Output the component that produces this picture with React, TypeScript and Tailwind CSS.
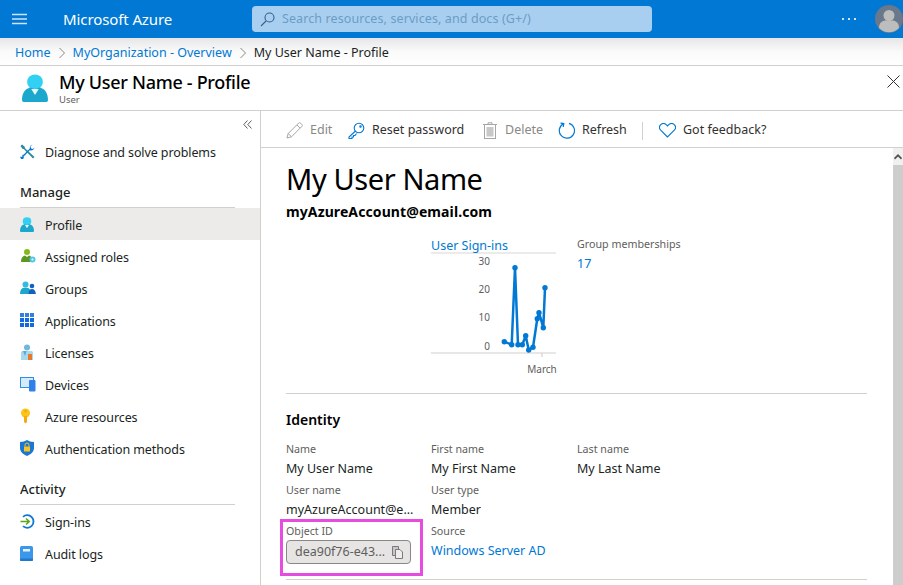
import { ReactNode } from "react"

const font = { fontFamily: '"Noto Sans", "Open Sans", sans-serif' }

function ProfileIcon({ width = 14, height = 15 }: { width?: number; height?: number }) {
  return (
    <svg width={width} height={height} viewBox="0 0 28 32" preserveAspectRatio="none">
      <circle cx="14" cy="9" r="8.500" fill="#32d0f2" />
      <path d="M0 30c0-8 3-13 9-14.500l5 2 5-2c6 1.500 9 6.500 9 14.500a2 2 0 0 1-2 2H2a2 2 0 0 1-2-2z" fill="#1ba8cc" />
      <path d="M10 17h8l-4 7z" fill="#e8f8fc" />
    </svg>
  )
}

function DiagnoseIcon() {
  return (
    <svg width="15" height="15" viewBox="0 0 15 15">
      <path d="M.5 2L2 .5l2.800 2.200v1.200l9.700 9L13 14.500 3.800 5H2.700z" fill="#2a8a9e" />
      <path d="M14.500 3.500a3.600 3.600 0 0 1-4.800 2.700L3.500 12.700a2 2 0 0 1 .3 1.300 1.800 1.800 0 0 1-3.300-1.500l1.200.6 1-1-.6-1.200a2 2 0 0 1 1.400-.1l6.300-6.300A3.600 3.600 0 0 1 12.500.5l-2 2 .6 1.900 1.900.6z" fill="#0078d4" />
    </svg>
  )
}

function RolesIcon() {
  return (
    <svg width="16" height="16" viewBox="0 0 16 16">
      <circle cx="7" cy="4" r="3" fill="#86b818" />
      <path d="M1 14c0-4 1.500-6 4-6.500L7 9l2-1.500c2 .5 3 2 3 6.500z" fill="#5e9624" />
      <circle cx="12.500" cy="11.500" r="3" fill="#50c7e8" />
      <circle cx="12.500" cy="11.500" r="1" fill="#ffffff" />
    </svg>
  )
}

function GroupsIcon() {
  return (
    <svg width="16" height="14" viewBox="0 0 16 14">
      <circle cx="5.500" cy="3.500" r="3" fill="#32bde0" />
      <path d="M0 13c0-4 1.500-6 4-6.300h3c2.500.3 4 2.300 4 6.300z" fill="#1ba8cc" />
      <circle cx="12" cy="5" r="2.300" fill="#0f62c0" />
      <path d="M8.500 13c0-3 1.200-5 3.500-5s3.800 2 3.800 5z" fill="#0f62c0" />
    </svg>
  )
}

function AppsIcon() {
  const cells = [0, 5, 10]
  return (
    <svg width="14" height="14" viewBox="0 0 14 14">
      {cells.map((y) =>
        cells.map((x) => <rect key={`${x}-${y}`} x={x} y={y} width="4" height="4" fill={y === 0 ? "#2f7fdc" : "#0f6cdc"} />),
      )}
    </svg>
  )
}

function LicenseIcon() {
  return (
    <svg width="14" height="17" viewBox="0 0 14 17">
      <circle cx="7" cy="3.500" r="3" fill="#6fb7dc" />
      <path d="M1 16V8.500C1 7.500 2 7 3 7h8c1 0 2 .5 2 1.500V16z" fill="#a8d8ee" />
      <path d="M3 7h3.500L5 12z" fill="#59a7d2" />
      <rect x="8" y="10" width="4" height="6" fill="#e8792b" />
    </svg>
  )
}

function DevicesIcon() {
  return (
    <svg width="16" height="15" viewBox="0 0 16 15">
      <rect x="0.500" y="0.500" width="13" height="10" fill="#d5ebfa" stroke="#2f8fe0" />
      <rect x="9" y="3" width="6.500" height="11.500" rx="1" fill="#2f80e8" />
    </svg>
  )
}

function KeyIcon() {
  return (
    <svg width="11" height="16" viewBox="0 0 11 16">
      <circle cx="5.500" cy="5" r="4.500" fill="#fcc419" />
      <circle cx="5.500" cy="3.200" r="1.100" fill="#f39c12" />
      <path d="M4 8h3v6l-1.500 1.500L4 14z" fill="#f7a90f" />
    </svg>
  )
}

function ShieldIcon() {
  return (
    <svg width="14" height="16" viewBox="0 0 14 16">
      <path d="M7 0c2 1.300 4 1.800 7 2v6c0 3.500-3 6.500-7 8-4-1.500-7-4.500-7-8V2c3-.2 5-.7 7-2z" fill="#1a78d2" />
      <rect x="4" y="6.500" width="6" height="5" rx="0.500" fill="#f7c325" />
      <path d="M5 6.500V5a2 2 0 0 1 4 0v1.500" fill="none" stroke="#f7c325" />
    </svg>
  )
}

function SignInIcon() {
  return (
    <svg width="15" height="15" viewBox="0 0 15 15">
      <path d="M3 2.800A6.300 6.300 0 1 1 3 12.200" fill="none" stroke="#0f78d4" strokeWidth="1.800" />
      <path d="M0.500 7.500H9M6 4.500l3.200 3-3.200 3" fill="none" stroke="#5ca81c" strokeWidth="1.600" />
    </svg>
  )
}

function AuditIcon() {
  return (
    <svg width="13" height="15" viewBox="0 0 13 15">
      <rect width="13" height="15" rx="1.500" fill="#3c97ea" />
      <rect x="3" y="3" width="7" height="2.500" fill="#e6f2fc" />
      <rect y="12.500" width="13" height="2.500" rx="1" fill="#1f78cc" />
    </svg>
  )
}

function Pencil() {
  return (
    <svg width="17" height="17" viewBox="0 0 17 17" fill="none" stroke="#a6a6a6" strokeWidth="1">
      <path d="M1 16l1.200-4.500L12.500 1.200a1.500 1.500 0 0 1 2.100 0l1.200 1.200a1.500 1.500 0 0 1 0 2.100L5.500 14.800z" />
      <path d="M2.200 11.500l3.300 3.300M11 3l3 3" />
    </svg>
  )
}

function ResetKey() {
  return (
    <svg width="17" height="17" viewBox="0 0 17 17" fill="none" stroke="#0078d4" strokeWidth="1.100">
      <circle cx="11" cy="6" r="4.800" />
      <circle cx="12.500" cy="4.500" r="0.700" />
      <path d="M7.500 9L1 15v1.500h3V15h1.500v-1.500H7l1.500-2" />
    </svg>
  )
}

function Trash() {
  return (
    <svg width="14" height="17" viewBox="0 0 14 17">
      <path d="M0 2.500h14M5 2.500V.8h4v1.700" stroke="#a6a6a6" fill="none" />
      <rect x="1.500" y="2.500" width="11" height="14" fill="none" stroke="#a6a6a6" />
      <rect x="3.500" y="5" width="7" height="9.500" fill="#c8c8c8" />
    </svg>
  )
}

function RefreshIcon() {
  return (
    <svg width="17" height="17" viewBox="0 0 17 17" fill="none" stroke="#0078d4" strokeWidth="1.200">
      <path d="M5.500 1.800A7.600 7.600 0 1 0 11 1.300" />
      <path d="M2.500 1.200l3.300.4-.6 3.400" />
    </svg>
  )
}

function Heart() {
  return (
    <svg width="17" height="15" viewBox="0 0 17 15" fill="none" stroke="#0078d4" strokeWidth="1.100">
      <path d="M8.500 14L1.700 7.200a4 4 0 0 1 0-5.500 4 4 0 0 1 5.500 0l1.300 1.300 1.300-1.300a4 4 0 0 1 5.500 0 4 4 0 0 1 0 5.500z" />
    </svg>
  )
}

function CopyIcon() {
  return (
    <svg width="11" height="13" viewBox="0 0 11 13" fill="none" stroke="#7a7a7a">
      <path d="M.5.500h6v9h-6z" fill="#c8c8c8" />
      <path d="M3.500 3.500h4.500l2.500 2.500v6.500h-7z" fill="#ededed" />
    </svg>
  )
}

function Chevron() {
  return (
    <svg width="8" height="12" viewBox="0 0 8 12" fill="none" stroke="#8a8886">
      <path d="M1.500 1l5 5-5 5" />
    </svg>
  )
}

function NavItem({ icon, label, active }: { icon: ReactNode; label: string; active?: boolean }) {
  return (
    <div className={`flex h-8 items-center pl-5 ${active ? "bg-[#edebe9]" : ""}`}>
      <span className="flex w-[25px] shrink-0 items-center">{icon}</span>
      <span className="pt-[5px] text-[12.500px] tracking-[-0.1px] text-[#201f1e]">{label}</span>
    </div>
  )
}

function SectionHead({ title }: { title: string }) {
  return (
    <div className="mr-[25px] ml-5 flex h-8 items-center border-b border-[#d2d0ce] pt-[2px] text-[13px] font-medium text-[#201f1e]">
      {title}
    </div>
  )
}

function ToolButton({ icon, label, disabled, className, iconClass = "w-6" }: { icon: ReactNode; label: string; disabled?: boolean; className: string; iconClass?: string }) {
  return (
    <div className={`flex items-center ${className}`}>
      <span className={`flex shrink-0 items-center ${iconClass}`}>{icon}</span>
      <span className={`text-[12.500px] ${disabled ? "text-[#8a8886]" : "text-[#323130]"}`}>{label}</span>
    </div>
  )
}

function Field({ label, value, link }: { label: string; value: string; link?: boolean }) {
  return (
    <div className="h-[41px] min-w-0">
      <div className="h-[17px] text-[10.700px] leading-[19px] text-[#605e5c]">{label}</div>
      <div className={`h-6 text-[12.500px] leading-6 whitespace-nowrap ${link ? "text-[#0078d4]" : "text-[#201f1e]"}`}>{value}</div>
    </div>
  )
}

const signIns: [number, number][] = [
  [73.3, 88.7], [80.7, 91.7], [84, 14.7], [87, 91.7], [91.3, 91.7], [94.7, 82.7],
  [97.7, 97], [102, 94.3], [106.3, 65.7], [108, 59.7], [112.3, 74.7], [114, 34.7],
]

function SignInChart() {
  const line = signIns.map(([x, y]) => `${x},${y}`).join(" ")
  return (
    <svg width="126" height="123" viewBox="0 1 126 123" className="block">
      <line x1="0" x2="125" y1="100" y2="100" stroke="#e1dfdd" strokeWidth="1.500" />
      <line x1="111" x2="111" y1="100" y2="104" stroke="#c8c6c4" />
      {[[30, 8], [20, 36], [10, 64], [0, 93]].map(([v, y]) => (
        <text key={v} x="59" y={y + 4} textAnchor="end" fontSize="10" fill="#605e5c">{v}</text>
      ))}
      <text x="111" y="120" textAnchor="middle" fontSize="10" fill="#605e5c">March</text>
      <polyline points={line} fill="none" stroke="#0078d4" strokeWidth="2.500" strokeLinejoin="round" />
      {signIns.map(([x, y]) => <circle key={x} cx={x} cy={y} r="2.700" fill="#0078d4" />)}
    </svg>
  )
}

export default function App() {
  return (
    <div className="flex h-[585px] w-[903px] flex-col overflow-hidden bg-white" style={font}>
      <header className="flex h-[38px] shrink-0 items-center bg-[#0078d4] text-white">
        <div className="flex w-[63px] shrink-0 justify-center pr-[25px]">
          <svg width="15" height="12" viewBox="0 0 15 12" stroke="#cfe4f6" strokeWidth="1.300">
            <path d="M0 1.500h15M0 6h15M0 10.500h15" />
          </svg>
        </div>
        <div className="w-[189px] shrink-0 text-[15px] tracking-[-0.1px]">Microsoft Azure</div>
        <div className="flex h-[26px] w-[400px] items-center rounded-sm bg-[#a9cff0] pl-2">
          <svg width="15" height="15" viewBox="0 0 15 15" fill="none" stroke="#32628c" strokeWidth="1.100" className="mr-[7px] shrink-0">
            <circle cx="9.500" cy="5.500" r="4.500" />
            <path d="M6 9L1 14" />
          </svg>
          <span className="text-[12.500px] tracking-[0.1px] text-[#6c9cc6]">Search resources, services, and docs (G+/)</span>
        </div>
        <div className="ml-auto flex items-center">
          <span className="mr-[19px] flex gap-1">
            <i className="h-[2px] w-[2px] bg-[#cfe4f6]" />
            <i className="h-[2px] w-[2px] bg-[#cfe4f6]" />
            <i className="h-[2px] w-[2px] bg-[#cfe4f6]" />
          </span>
          <svg width="28" height="28" viewBox="0 0 28 28">
            <circle cx="14" cy="14" r="14" fill="#69788a" />
            <circle cx="14" cy="10.500" r="5.500" fill="#bdbdbd" />
            <path d="M4 23c0-5 3-7 6-7.500h8c3 .5 6 2.500 6 7.500a14 14 0 0 1-20 0z" fill="#bdbdbd" />
          </svg>
        </div>
      </header>

      <nav className="flex h-[28px] shrink-0 items-center border-b border-[#d2d0ce] bg-gradient-to-b from-[#e6e6e6] via-[#fafafa] to-white pt-[3px] pl-[15px] text-[12.500px]">
        <span className="text-[#0078d4]">Home</span>
        <span className="mx-[7px]"><Chevron /></span>
        <span className="text-[#0078d4]">MyOrganization - Overview</span>
        <span className="mx-[7px]"><Chevron /></span>
        <span className="text-[#201f1e]">My User Name - Profile</span>
      </nav>

      <section className="flex h-[45px] shrink-0 items-center border-b border-[#d2d0ce] pl-[22px]">
        <ProfileIcon width={26} height={28} />
        <div className="ml-[11px] flex flex-col">
          <h1 className="text-[18px] leading-[23px] font-medium tracking-[-0.3px] text-[#000000]">My User Name - Profile</h1>
          <span className="pb-px text-[9.500px] leading-[11px] text-[#605e5c]">User</span>
        </div>
        <svg width="13" height="13" viewBox="0 0 13 13" stroke="#323130" className="mt-[9px] mr-[3px] ml-auto self-start">
          <path d="M.5.500l12 12M12.500.500l-12 12" />
        </svg>
      </section>

      <div className="flex min-h-0 flex-1">
        <aside className="w-[261px] shrink-0 border-r border-[#d2d0ce]">
          <div className="flex h-6 items-center justify-end pt-[3px] pr-[8px]">
            <svg width="9" height="9" viewBox="0 0 9 9" fill="none" stroke="#605e5c">
              <path d="M4.500.500L.800 4.500l3.700 4M8.500.500L4.800 4.500l3.700 4" />
            </svg>
          </div>
          <NavItem icon={<DiagnoseIcon />} label="Diagnose and solve problems" />
          <div className="h-[9px]" />
          <SectionHead title="Manage" />
          <NavItem active icon={<ProfileIcon />} label="Profile" />
          <NavItem icon={<RolesIcon />} label="Assigned roles" />
          <NavItem icon={<GroupsIcon />} label="Groups" />
          <NavItem icon={<AppsIcon />} label="Applications" />
          <NavItem icon={<LicenseIcon />} label="Licenses" />
          <NavItem icon={<DevicesIcon />} label="Devices" />
          <NavItem icon={<KeyIcon />} label="Azure resources" />
          <NavItem icon={<ShieldIcon />} label="Authentication methods" />
          <div className="h-[9px]" />
          <SectionHead title="Activity" />
          <NavItem icon={<SignInIcon />} label="Sign-ins" />
          <NavItem icon={<AuditIcon />} label="Audit logs" />
        </aside>

        <div className="flex min-w-0 flex-1 flex-col">
          <div className="flex h-[37px] shrink-0 items-center border-b border-[#d2d0ce] pt-[3px] pl-[25px]">
            <ToolButton disabled icon={<Pencil />} label="Edit" className="w-[62px]" />
            <ToolButton icon={<ResetKey />} label="Reset password" className="w-[135px]" />
            <ToolButton disabled icon={<Trash />} label="Delete" className="w-[75px]" iconClass="w-[22px]" />
            <ToolButton icon={<RefreshIcon />} label="Refresh" className="w-[84px]" />
            <span className="mr-4 h-[18px] w-px bg-[#d2d0ce]" />
            <ToolButton icon={<Heart />} label="Got feedback?" className="" />
          </div>

          <div className="flex min-h-0 flex-1">
            <main className="min-w-0 flex-1 pt-[13px] pr-[26px] pl-[25px]">
              <h2 className="text-[29px] leading-9 tracking-[-0.4px] text-[#000000]">My User Name</h2>
              <div className="mt-[5px] text-[14px] leading-[20px] font-bold tracking-[0.1px] text-[#000000]">myAzureAccount@email.com</div>

              <div className="mt-[14px] grid h-[158px] grid-cols-[145px_146px_1fr] border-b border-[#d2d0ce]">
                <div />
                <div>
                  <div className="h-[18px] w-[125px] border-b-2 border-[#edebe9] text-[12.500px] leading-[20px] text-[#0078d4]">User Sign-ins</div>
                  <SignInChart />
                </div>
                <div>
                  <div className="h-[19px] text-[10.700px] leading-[17px] text-[#605e5c]">Group memberships</div>
                  <div className="text-[12.500px] leading-[18px] text-[#0078d4]">17</div>
                </div>
              </div>

              <div className="mt-[15px] text-[14px] leading-[22px] font-semibold text-[#000000]">Identity</div>
              <div className="mt-[9px] grid grid-cols-[145px_146px_1fr]">
                <Field label="Name" value="My User Name" />
                <Field label="First name" value="My First Name" />
                <Field label="Last name" value="My Last Name" />
                <Field label="User name" value="myAzureAccount@e..." />
                <Field label="User type" value="Member" />
                <div />
                <div className="relative h-[49px]">
                  <div className="h-[17px] text-[10.700px] leading-[19px] text-[#605e5c]">Object ID</div>
                  <div className="mt-px flex h-6 w-[125px] items-center justify-between rounded-sm border border-[#8a8886] bg-[#e6e5e4] pr-[7px] pl-2">
                    <span className="text-[12.500px] text-[#605e5c]">dea90f76-e43...</span>
                    <CopyIcon />
                  </div>
                  <div className="pointer-events-none absolute top-[-3px] left-[-6px] h-[57px] w-[143px] border-[3px] border-[#e64ce0]" />
                </div>
                <Field label="Source" value="Windows Server AD" link />
              </div>
              <div className="mt-[8px] border-b border-[#d2d0ce]" />
            </main>
            <div className="flex w-[10px] shrink-0 flex-col bg-[#cdcdcd]">
              <div className="flex h-[17px] items-center justify-center bg-[#f0f0f0]">
                <svg width="8" height="6" viewBox="0 0 8 6" fill="#505050">
                  <path d="M4 0l4 4-1 1.500-3-3-3 3L0 4z" />
                </svg>
              </div>
            </div>
          </div>
        </div>
      </div>
    </div>
  )
}
